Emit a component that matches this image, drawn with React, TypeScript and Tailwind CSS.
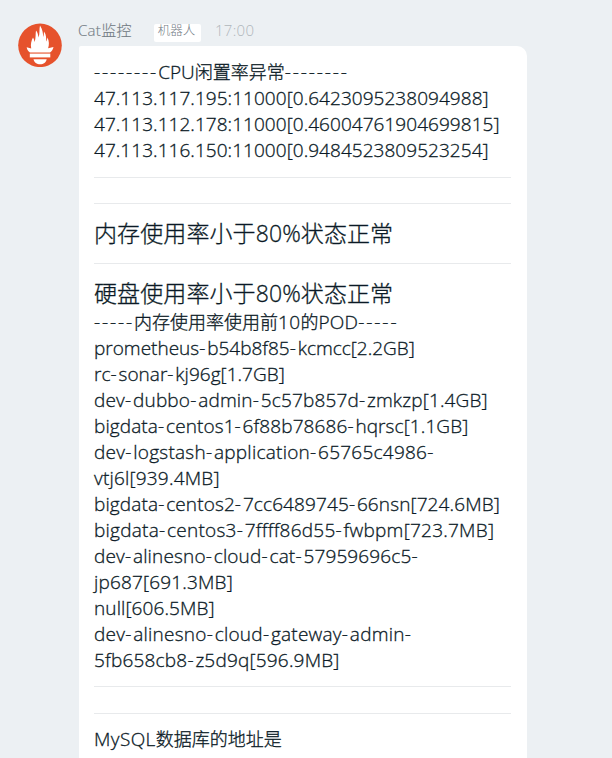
const base = "flex h-[26px] items-center whitespace-nowrap text-[19px]";

// Splits a line into Chinese runs, dash runs and everything else.
function Mixed({ text }: { text: string }) {
  const parts = text.split(/([\u4e00-\u9fff]+|-+)/).filter(Boolean);
  return (
    <span>
      {parts.map((p, i) => (
        <span
          key={i}
          className={p[0] === "-" ? "tracking-[1.9px]" : p[0] >= "\u4e00" ? "text-[18px] tracking-normal" : ""}
        >
          {p}
        </span>
      ))}
    </span>
  );
}

type Row = [text: string, tracking: string];

const cpuRows: Row[] = [
  ["--------CPU闲置率异常--------", "tracking-normal"],
  ["47.113.117.195:11000[0.6423095238094988]", "tracking-[0.05px]"],
  ["47.113.112.178:11000[0.46004761904699815]", "tracking-[0.05px]"],
  ["47.113.116.150:11000[0.9484523809523254]", "tracking-[0.05px]"],
];

const podRows: Row[] = [
  ["-----内存使用率使用前10的POD-----", "tracking-[0.3px]"],
  ["prometheus-b54b8f85-kcmcc[2.2GB]", "tracking-normal"],
  ["rc-sonar-kj96g[1.7GB]", "tracking-[0.03px]"],
  ["dev-dubbo-admin-5c57b857d-zmkzp[1.4GB]", "tracking-[0.17px]"],
  ["bigdata-centos1-6f88b78686-hqrsc[1.1GB]", "tracking-[0.1px]"],
  ["dev-logstash-application-65765c4986-", "tracking-[0.25px]"],
  ["vtj6l[939.4MB]", "tracking-[0.2px]"],
  ["bigdata-centos2-7cc6489745-66nsn[724.6MB]", "tracking-[0.12px]"],
  ["bigdata-centos3-7ffff86d55-fwbpm[723.7MB]", "tracking-[0.25px]"],
  ["dev-alinesno-cloud-cat-57959696c5-", "tracking-[0.15px]"],
  ["jp687[691.3MB]", "tracking-[0.17px]"],
  ["null[606.5MB]", "tracking-[0.1px]"],
  ["dev-alinesno-cloud-gateway-admin-", "tracking-[0.24px]"],
  ["5fb658cb8-z5d9q[596.9MB]", "tracking-[0.2px]"],
];

function Rows({ rows }: { rows: Row[] }) {
  return (
    <>
      {rows.map(([text, tracking]) => (
        <div key={text} className={`${base} ${tracking}`}>
          <Mixed text={text} />
        </div>
      ))}
    </>
  );
}

function Avatar() {
  return (
    <svg viewBox="0 0 44 44" className="mt-[23px] ml-[18px] h-[44px] w-[44px] shrink-0">
      <circle cx="22" cy="22.3" r="21.8" fill="#e6522c" />
      <path
        fill="#fff"
        d="M13.2 25.5C12.300 21 13.5 17.500 15 14.500c1 1.500 1.200 3 1.600 4.500C18 15 17.400 10.500 18 7.500c1.700 2 2.200 4.500 2.500 7C22 11 21 6.500 22 2.500c2.700 4 3 8 3.200 11.500.8-2 .6-3.500.8-5.500 2.500 3.500 2.200 7 2.200 10 .7-1 1-2.500 1.200-4 2 3.500 1.800 7.500.7 10.700l5.400-1.200c-.5 2.800-1.700 4.200-3.500 5.500H12c-1.800-1.400-3-2.900-3.300-5.300z"
      />
      <rect x="11.800" y="30.600" width="20.500" height="3.800" fill="#fff" />
      <path fill="#fff" d="M15.500 36.300h13.200c-.5 3-3.300 5-6.600 5s-6.100-2-6.600-5z" />
    </svg>
  );
}

export default function App() {
  return (
    <div className="flex h-[758px] w-[612px] overflow-hidden bg-[#ecf0f3] font-['Open_Sans','Noto_Sans_CJK_SC',sans-serif] font-light text-[#0b1a26]">
      <Avatar />
      <div className="ml-[16px] flex w-[449px] flex-col">
        <header className="flex h-[46px] shrink-0 items-start pt-[20px] text-[15px] leading-[20px] whitespace-nowrap text-[#747d85]">
          <span className="w-[76px] tracking-[0.3px] [-webkit-text-stroke:0.15px]">Cat监控</span>
          <span className="mt-[4px] flex h-[18px] w-[47px] items-center justify-center rounded-[2px] bg-white pr-[2px] pb-[3px] text-[12.500px] leading-none">
            机器人
          </span>
          <span className="ml-[14px] tracking-[0.3px] text-[#b0b6bb]">17:00</span>
        </header>
        <main className="ml-px flex h-[720px] shrink-0 flex-col rounded-tl-[2px] rounded-tr-[10px] bg-white pt-[13px] pr-4 pl-[15px] [-webkit-text-stroke:0.3px]">
          <Rows rows={cpuRows} />
          <hr className="mt-[14px] border-[#e8eaec]" />
          <hr className="mt-[25px] border-[#e8eaec]" />
          <h2 className="mt-[13px] flex h-[32px] items-center text-[23px] tracking-[0.1px] whitespace-nowrap">
            内存使用率小于80%状态正常
          </h2>
          <hr className="mt-[14px] border-[#e8eaec]" />
          <h2 className="mt-[13px] flex h-[32px] items-center text-[23px] tracking-[0.1px] whitespace-nowrap">
            硬盘使用率小于80%状态正常
          </h2>
          <Rows rows={podRows} />
          <hr className="mt-[13px] border-[#e8eaec]" />
          <hr className="mt-[26px] border-[#e8eaec]" />
          <div className={`mt-[12px] tracking-[0.4px] ${base}`}>
            <Mixed text="MySQL数据库的地址是" />
          </div>
        </main>
      </div>
    </div>
  );
}
